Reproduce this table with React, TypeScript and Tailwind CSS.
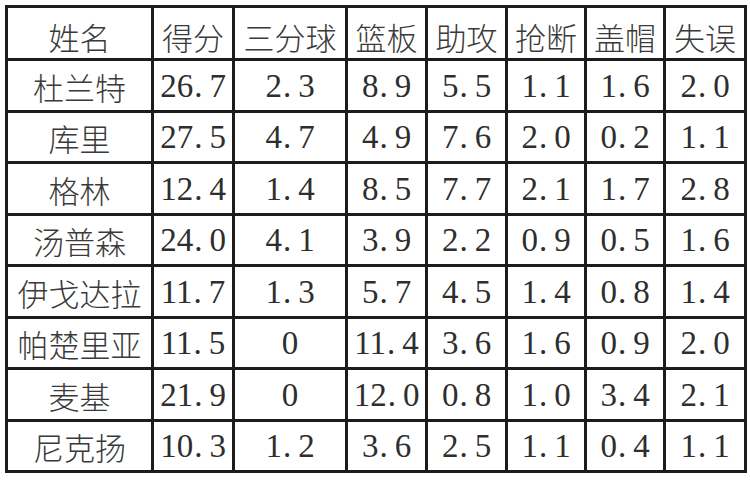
const headers = ["姓名", "得分", "三分球", "篮板", "助攻", "抢断", "盖帽", "失误"];

const rows: string[][] = [
  ["杜兰特", "26.7", "2.3", "8.9", "5.5", "1.1", "1.6", "2.0"],
  ["库里", "27.5", "4.7", "4.9", "7.6", "2.0", "0.2", "1.1"],
  ["格林", "12.4", "1.4", "8.5", "7.7", "2.1", "1.7", "2.8"],
  ["汤普森", "24.0", "4.1", "3.9", "2.2", "0.9", "0.5", "1.6"],
  ["伊戈达拉", "11.7", "1.3", "5.7", "4.5", "1.4", "0.8", "1.4"],
  ["帕楚里亚", "11.5", "0", "11.4", "3.6", "1.6", "0.9", "2.0"],
  ["麦基", "21.9", "0", "12.0", "0.8", "1.0", "3.4", "2.1"],
  ["尼克扬", "10.3", "1.2", "3.6", "2.5", "1.1", "0.4", "1.1"],
];

const widths = ["w-[146px]", "w-[81px]", "w-[113px]", "w-[80px]", "w-[80px]", "w-[79px]", "w-[79px]", "w-[81px]"];

const cjk = "font-['Noto_Sans_CJK_SC',sans-serif] font-light text-[#3a3a3a]";
const num = "font-['Liberation_Serif','Noto_Sans_CJK_SC',serif] text-[#2e2e2e]";

// SimSun style: the decimal point sits in a wide half-width cell
function Num({ v }: { v: string }) {
  const [a, b] = v.split(".");
  if (b === undefined) return <>{a}</>;
  return (
    <>
      {a}
      <span className="mr-[7px] ml-[1px]">.</span>
      {b}
    </>
  );
}

export default function App() {
  return (
    <div className="h-[480px] w-[750px] bg-white pl-[5px] pt-[5px]">
      <table className="w-[739px] table-fixed border-collapse border-[3px] border-[#1c1c1c]">
        <colgroup>
          {widths.map((w, i) => (
            <col key={i} className={w} />
          ))}
        </colgroup>
        <thead>
          <tr className="h-[53px]">
            {headers.map((h) => (
              <th
                key={h}
                className={`border-[3px] border-[#1c1c1c] pt-[6px] text-center text-[31px] leading-none ${cjk}`}
              >
                {h}
              </th>
            ))}
          </tr>
        </thead>
        <tbody>
          {rows.map((r) => (
            <tr key={r[0]} className="h-[51.5px]">
              {r.map((c, i) => (
                <td
                  key={i}
                  className={`overflow-visible whitespace-nowrap border-[3px] border-[#1c1c1c] p-0 pt-[2px] text-center leading-none ${
                    i === 0 ? `text-[31px] ${cjk}` : `text-[33px] ${num}`
                  }`}
                >
                  {i === 0 ? c : <Num v={c} />}
                </td>
              ))}
            </tr>
          ))}
        </tbody>
      </table>
    </div>
  );
}
